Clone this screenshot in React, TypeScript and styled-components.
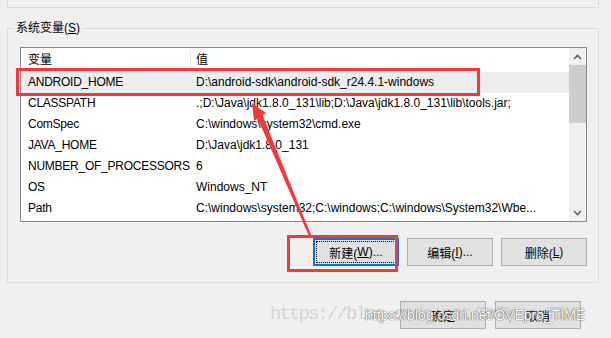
import React from 'react';
import styled, { createGlobalStyle } from 'styled-components';

const GlobalStyle = createGlobalStyle`
    html, body {
        margin: 0;
        padding: 0;
        background: #f0f0f0;
    }
    body {
        font-family: "Liberation Sans", "Noto Sans CJK SC", sans-serif;
        font-size: 12px;
        color: #000;
    }
`

interface EnvVar {
    name: string,
    value: string
}

const vars: EnvVar[] = [
    { name: 'ANDROID_HOME', value: 'D:\\android-sdk\\android-sdk_r24.4.1-windows' },
    { name: 'CLASSPATH', value: '.;D:\\Java\\jdk1.8.0_131\\lib;D:\\Java\\jdk1.8.0_131\\lib\\tools.jar;' },
    { name: 'ComSpec', value: 'C:\\windows\\system32\\cmd.exe' },
    { name: 'JAVA_HOME', value: 'D:\\Java\\jdk1.8.0_131' },
    { name: 'NUMBER_OF_PROCESSORS', value: '6' },
    { name: 'OS', value: 'Windows_NT' },
    { name: 'Path', value: 'C:\\windows\\system32;C:\\windows;C:\\windows\\System32\\Wbe...' },
]

const Chevron: React.FC<{ up?: boolean }> = ({ up }) => (
    <svg width="9" height="6" viewBox="0 0 9 6">
        <polyline
            points={up ? '1,5 4.5,1.5 8,5' : '1,1 4.5,4.5 8,1'}
            fill="none" stroke="#606060" strokeWidth="1.6" />
    </svg>
)

const App: React.FC = () => {
    return (<Page>
        <GlobalStyle />
        <UpperBoxEnd />
        <GroupBox>
            <Legend>系统变量(<u>S</u>)</Legend>
            <ListView>
                <Table>
                    <HeaderRow>
                        <HeadCell divider>变量</HeadCell>
                        <HeadCell>值</HeadCell>
                    </HeaderRow>
                    {vars.map((v, i) => (
                        <Row key={v.name} selected={i === 0}>
                            <Cell>{v.name}</Cell>
                            <Cell value>{v.value}</Cell>
                        </Row>
                    ))}
                </Table>
                <ScrollBar>
                    <ScrollArrow><Chevron up /></ScrollArrow>
                    <Thumb />
                    <Track />
                    <ScrollArrow><Chevron /></ScrollArrow>
                </ScrollBar>
            </ListView>
            <ButtonRow>
                <Button focused><FocusRing>新建(<u>W</u>)...</FocusRing></Button>
                <Button>编辑(<u>I</u>)...</Button>
                <Button>删除(<u>L</u>)</Button>
            </ButtonRow>
        </GroupBox>
        <DialogButtons>
            <Button>确定</Button>
            <Button>取消</Button>
        </DialogButtons>

        {/* 画像の上に描かれた注釈 */}
        <Mark style={{ left: 16, top: 68, width: 464, height: 28 }} />
        <Mark style={{ left: 287, top: 235, width: 111, height: 37 }} />
        <ArrowLayer width="611" height="338" viewBox="0 0 611 338">
            <polygon points="252,103 254,121 266,113" fill="#f03a3a" />
            <polygon points="257,117 262,114 311,235 309,236" fill="#f03a3a" />
        </ArrowLayer>
        <GrayWatermark>https://blog.csdn.net/OVEpro_TIME</GrayWatermark>
        <WhiteWatermark>https://blog.csdn.net/OVEpro_TIME</WhiteWatermark>
    </Page>);
}

const Page = styled.div`
    position: relative;
    width: 611px;
    height: 338px;
    box-sizing: border-box;
    padding: 0 12px 0 7px;
    overflow: hidden;
    background: #f0f0f0;
`

const UpperBoxEnd = styled.div`
    height: 8px;
    box-sizing: border-box;
    border: 1px solid #dcdcdc;
    border-top: 0;
`

const GroupBox = styled.fieldset`
    margin: 12px 0 0 0;
    padding: 0 11px 16px 12px;
    border: 1px solid #dcdcdc;
    min-width: 0;
`

const Legend = styled.legend`
    margin-left: -6px;
    padding: 0 2px;
    line-height: 16px;
    font-size: 12px;
    color: #000;
    u {
        text-decoration-thickness: 1px;
    }
`

const ListView = styled.div`
    margin-top: 11px;
    height: 175px;
    box-sizing: border-box;
    border: 1px solid #828790;
    background: #fff;
    display: grid;
    grid-template-columns: 1fr 17px;
`

const Table = styled.div`
    display: flex;
    flex-direction: column;
    overflow: hidden;
`

const HeaderRow = styled.div`
    display: grid;
    grid-template-columns: 170px 1fr;
    height: 24px;
    align-items: center;
`

const HeadCell = styled.div<{ divider?: boolean }>`
    padding-left: ${p => p.divider ? '7px' : '5px'};
    height: 20px;
    line-height: 20px;
    border-right: ${p => p.divider ? '1px solid #e5e5e5' : 'none'};
`

const Row = styled.div<{ selected?: boolean }>`
    display: grid;
    grid-template-columns: 170px 1fr;
    height: 21px;
    line-height: 21px;
    background: ${p => p.selected ? '#ededed' : 'transparent'};
`

const Cell = styled.div<{ value?: boolean }>`
    padding-left: ${p => p.value ? '5px' : '7px'};
    white-space: nowrap;
    overflow: ${p => p.value ? 'hidden' : 'visible'};
    letter-spacing: ${p => p.value ? '0' : '-0.25px'};
`

const ScrollBar = styled.div`
    display: flex;
    flex-direction: column;
    background: #f0f0f0;
`

const ScrollArrow = styled.div`
    height: 17px;
    display: flex;
    align-items: center;
    justify-content: center;
`

const Thumb = styled.div`
    height: 58px;
    background: #cdcdcd;
`

const Track = styled.div`
    flex: 1;
`

const ButtonRow = styled.div`
    display: flex;
    justify-content: flex-end;
    gap: 8px;
    margin-top: 16px;
`

const Button = styled.button<{ focused?: boolean }>`
    width: 86px;
    height: 28px;
    box-sizing: border-box;
    margin: 0;
    padding: ${p => p.focused ? '1px' : '0'};
    background: #e1e1e1;
    border: ${p => p.focused ? '2px solid #0078d7' : '1px solid #adadad'};
    font-family: "Liberation Sans", "Noto Sans CJK SC", sans-serif;
    font-size: 12px;
    color: #000;
    display: flex;
    align-items: center;
    justify-content: center;
    u {
        text-decoration-thickness: 1px;
    }
`

const FocusRing = styled.span`
    flex: 1;
    align-self: stretch;
    display: flex;
    align-items: center;
    justify-content: center;
    border: 1px dotted #000;
`

const DialogButtons = styled.div`
    display: flex;
    justify-content: flex-end;
    gap: 9px;
    margin: 18px 18px 0 0;
`

const Mark = styled.div`
    position: absolute;
    box-sizing: border-box;
    border: 3px solid #f23a3a;
`

const ArrowLayer = styled.svg`
    position: absolute;
    left: 0;
    top: 0;
    pointer-events: none;
`

const GrayWatermark = styled.div`
    position: absolute;
    left: 270px;
    top: 303px;
    font-family: "Liberation Mono", monospace;
    font-size: 19px;
    letter-spacing: -1.9px;
    color: rgba(175, 175, 175, 0.45);
    white-space: nowrap;
    pointer-events: none;
`

const WhiteWatermark = styled.div`
    position: absolute;
    left: 365px;
    top: 307px;
    font-family: "Liberation Sans", sans-serif;
    font-size: 14px;
    color: #fff;
    white-space: nowrap;
    text-shadow: 0 0 1px rgba(60, 60, 60, 0.9), 0 0 1px rgba(60, 60, 60, 0.9);
    pointer-events: none;
`

export default App;
